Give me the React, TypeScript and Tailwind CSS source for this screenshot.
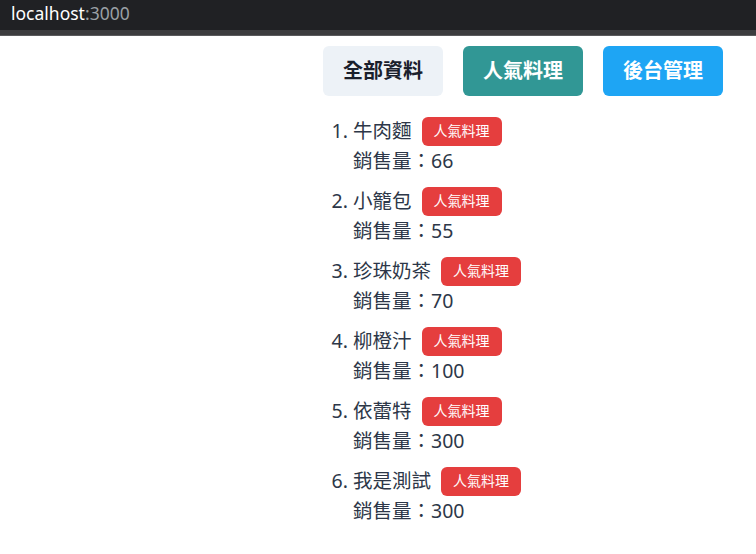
import React from "react";

const items = [
  { name: "牛肉麵", sales: 66 },
  { name: "小籠包", sales: 55 },
  { name: "珍珠奶茶", sales: 70 },
  { name: "柳橙汁", sales: 100 },
  { name: "依蕾特", sales: 300 },
  { name: "我是測試", sales: 300 },
];

export default function App() {
  return (
    <div className="min-h-[554px] bg-white" style={{ fontFamily: '"Noto Sans", "Noto Sans CJK TC", sans-serif' }}>
      <div className="h-[30px] bg-[#202124] flex items-center pl-[11px] text-[17.5px] leading-none pb-[2px]">
        <span className="text-white">localhost</span>
        <span className="text-[#9aa0a6]">:3000</span>
      </div>
      <div className="h-[5px] bg-[#3c3c3e]" />
      <div className="h-[1px] bg-[#5a5a5c]" />
      <div className="ml-[323px] w-[400px] pt-[10px]">
        <div className="flex gap-[20px]">
          <button className="w-[120px] h-[50px] rounded-[6px] bg-[#edf2f7] text-[#1a202c] font-bold text-[20px]">全部資料</button>
          <button className="w-[120px] h-[50px] rounded-[6px] bg-[#319795] text-white font-bold text-[20px]">人氣料理</button>
          <button className="w-[120px] h-[50px] rounded-[6px] bg-[#1ea5f4] text-white font-bold text-[20px]">後台管理</button>
        </div>
        <ol className="list-decimal pl-[30px] mt-[20px] text-[#2d3748] text-[19.5px]">
          {items.map((it) => (
            <li key={it.name} className="mb-[10px] leading-[30px]">
              <div className="inline-flex items-center h-[30px]">
                <span>{it.name}</span>
                <span className="ml-[10px] inline-flex items-center justify-center h-[29px] px-[12px] rounded-[6px] bg-[#e53e3e] text-white text-[14px]">人氣料理</span>
              </div>
              <div className="leading-[30px]">銷售量：{it.sales}</div>
            </li>
          ))}
        </ol>
      </div>
    </div>
  );
}
